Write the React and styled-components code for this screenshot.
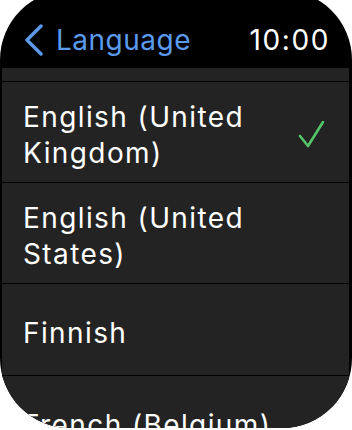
import React from "react";
import styled, { createGlobalStyle } from "styled-components";

const GlobalStyle = createGlobalStyle`
  html, body {
    margin: 0;
    padding: 0;
    background: #ffffff;
    overflow: hidden;
  }
  body {
    font-family: Inter, Roboto, "Liberation Sans", sans-serif;
  }
`;

const Screen = styled.div`
  width: 352px;
  height: 438px;
  margin-top: -10px;
  border-radius: 70px;
  overflow: hidden;
  background: #000;
  display: flex;
  flex-direction: column;
`;

const Header = styled.div`
  flex: none;
  height: 78px;
  padding: 22px 24px 0 24px;
  box-sizing: border-box;
  display: flex;
  align-items: center;
  justify-content: space-between;
`;

const BackLink = styled.a`
  display: flex;
  align-items: center;
  gap: 12px;
  color: #5a9bef;
  font-size: 28px;
  letter-spacing: 0.5px;
  text-decoration: none;
`;

const Clock = styled.span`
  color: #fff;
  font-size: 28px;
  letter-spacing: 1.6px;
  margin-right: -2px;
`;

const Viewport = styled.div`
  flex: 1;
  overflow: hidden;
  padding: 0 3px 0 2px;
`;

const List = styled.ul`
  list-style: none;
  margin: -78px 0 0 0;
  padding: 0;
`;

const Row = styled.li`
  min-height: 92px;
  box-sizing: border-box;
  padding: 17px 22px 11px 21px;
  background: #232323;
  border-bottom: 1px solid #000;
  display: flex;
  align-items: center;
  justify-content: space-between;
  gap: 12px;
`;

const Label = styled.span`
  color: #fff;
  font-size: 28px;
  line-height: 36px;
  letter-spacing: 1.4px;
  max-width: 250px;
`;

const CheckIcon = styled.svg`
  flex: none;
  margin-top: -4px;
`;

const Check = () => (
  <CheckIcon width="30" height="30" viewBox="0 0 30 30" fill="none">
    <path
      d="M3 18 L11 28 L26 4"
      stroke="#55c466"
      strokeWidth="2.6"
      strokeLinecap="round"
      strokeLinejoin="round"
    />
  </CheckIcon>
);

const Chevron = () => (
  <svg width="20" height="32" viewBox="0 0 20 32" fill="none">
    <path
      d="M17 2 L3 16 L17 30"
      stroke="#5a9bef"
      strokeWidth="3.4"
      strokeLinecap="round"
      strokeLinejoin="round"
    />
  </svg>
);

const languages = [
  { name: "English (India)" },
  { name: "English (United Kingdom)", selected: true },
  { name: "English (United States)" },
  { name: "Finnish" },
  { name: "French (Belgium)" },
  { name: "French (Canada)" },
];

export default function App() {
  return (
    <>
      <GlobalStyle />
      <Screen>
        <Header>
          <BackLink href="#">
            <Chevron />
            Language
          </BackLink>
          <Clock>10:00</Clock>
        </Header>
        <Viewport>
          <List>
            {languages.map((l) => (
              <Row key={l.name}>
                <Label>{l.name}</Label>
                {l.selected && <Check />}
              </Row>
            ))}
          </List>
        </Viewport>
      </Screen>
    </>
  );
}
